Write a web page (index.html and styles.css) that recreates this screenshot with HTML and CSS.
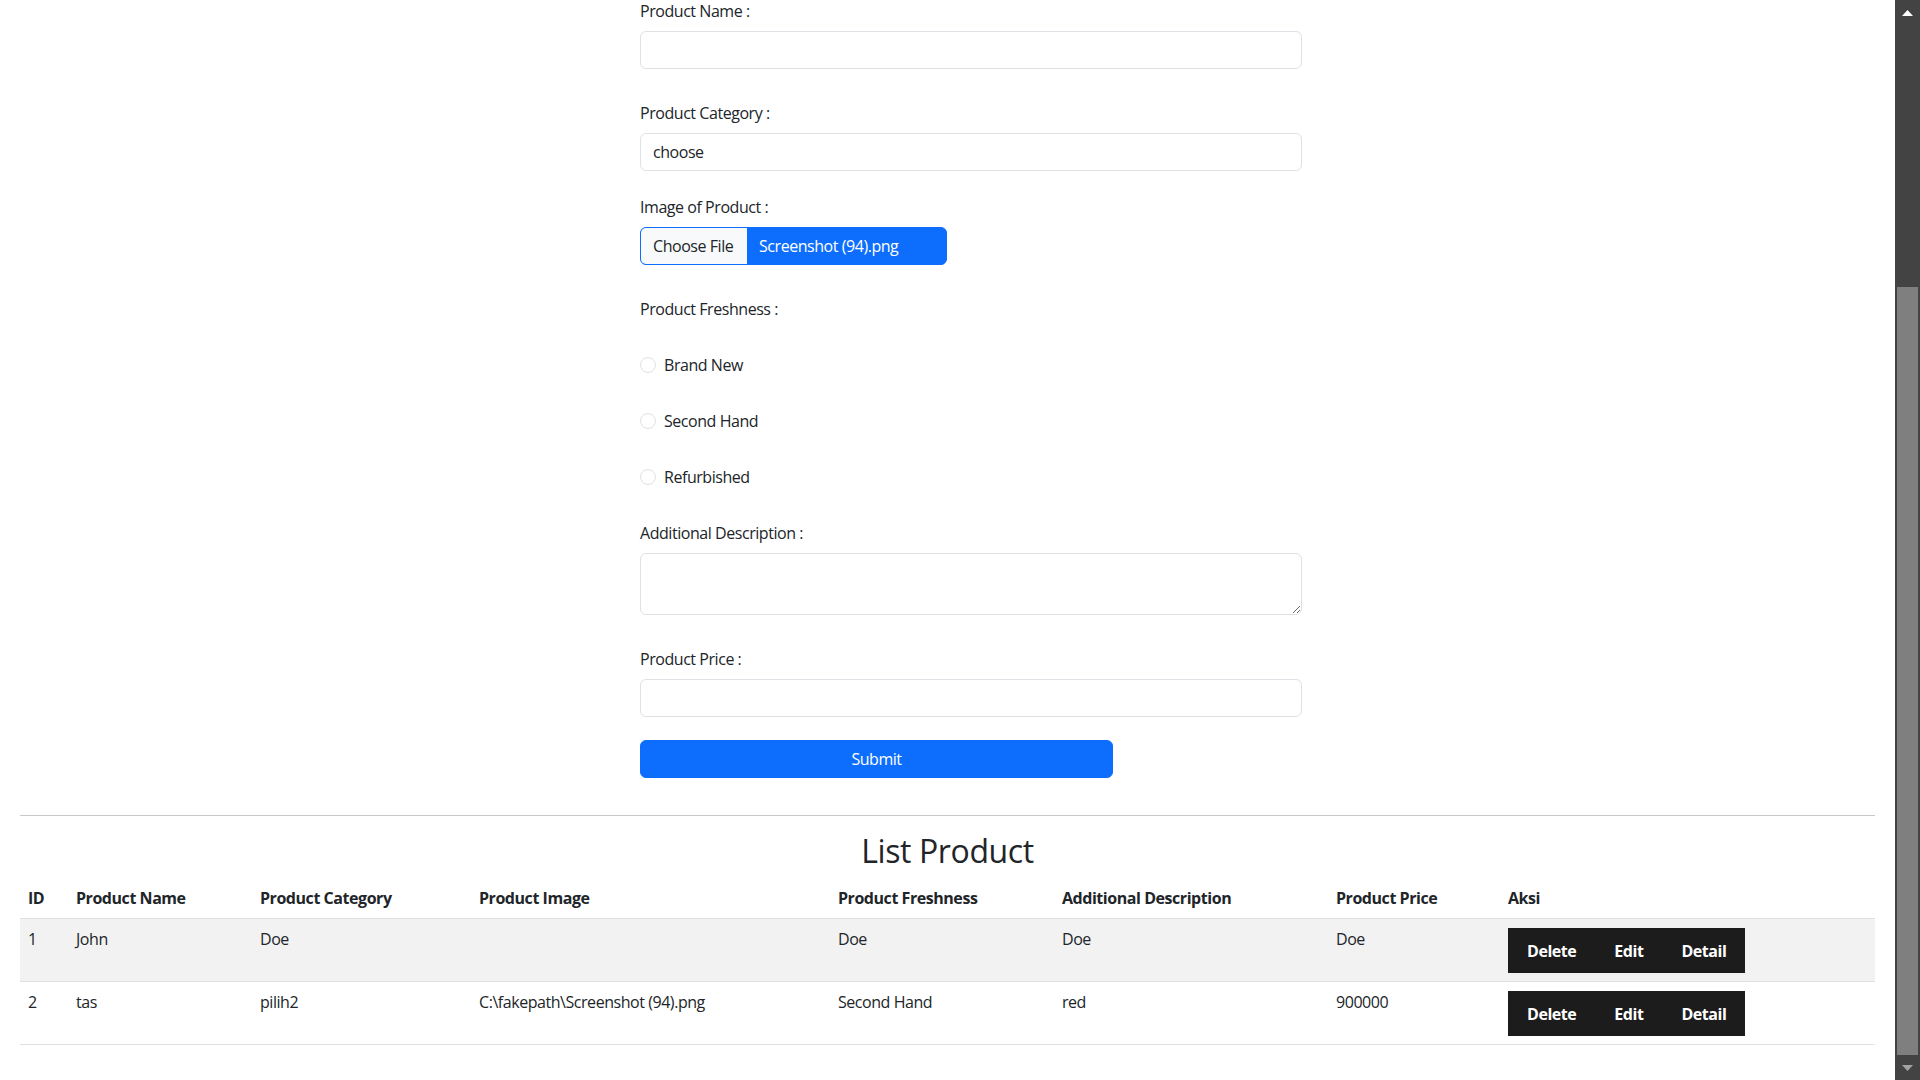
FILE: index.html
```html
<!DOCTYPE html>
<html lang="en">
<head>
<meta charset="utf-8">
<title>Product Form</title>
<link rel="stylesheet" href="styles.css">
</head>
<body>
<div class="page">
  <main class="content">
    <form class="product-form">
      <div class="field field-lg">
        <label class="form-label">Product Name :</label>
        <input class="form-control" type="text">
      </div>
      <div class="field field-md">
        <label class="form-label">Product Category :</label>
        <input class="form-control" type="text" value="choose">
      </div>
      <div class="field field-lg">
        <label class="form-label">Image of Product :</label>
        <div class="file-input">
          <span class="file-btn">Choose File</span>
          <span class="file-name">Screenshot (94).png</span>
        </div>
      </div>
      <div class="radio-group">
        <label class="form-label plain">Product Freshness :</label>
        <div class="form-check"><input class="form-check-input" type="radio" name="fresh"><label>Brand New</label></div>
        <div class="form-check"><input class="form-check-input" type="radio" name="fresh"><label>Second Hand</label></div>
        <div class="form-check"><input class="form-check-input" type="radio" name="fresh"><label>Refurbished</label></div>
      </div>
      <div class="field field-lg">
        <label class="form-label">Additional Description :</label>
        <textarea class="form-control textarea" rows="2"></textarea>
      </div>
      <div class="field field-submit">
        <label class="form-label">Product Price :</label>
        <input class="form-control" type="text">
      </div>
      <button type="button" class="btn-submit">Submit</button>
    </form>

    <hr class="divider">

    <h2 class="list-title">List Product</h2>

    <table class="product-table">
      <colgroup>
        <col class="c-id"><col class="c-name"><col class="c-cat"><col class="c-img"><col class="c-fresh"><col class="c-desc"><col class="c-price"><col class="c-aksi">
      </colgroup>
      <thead>
        <tr>
          <th>ID</th><th>Product Name</th><th>Product Category</th><th>Product Image</th><th>Product Freshness</th><th>Additional Description</th><th>Product Price</th><th>Aksi</th>
        </tr>
      </thead>
      <tbody>
        <tr class="striped">
          <td>1</td><td>John</td><td>Doe</td><td></td><td>Doe</td><td>Doe</td><td>Doe</td>
          <td><div class="btn-group"><button type="button">Delete</button><button type="button">Edit</button><button type="button">Detail</button></div></td>
        </tr>
        <tr>
          <td>2</td><td>tas</td><td>pilih2</td><td>C:\fakepath\Screenshot (94).png</td><td>Second Hand</td><td>red</td><td>900000</td>
          <td><div class="btn-group"><button type="button">Delete</button><button type="button">Edit</button><button type="button">Detail</button></div></td>
        </tr>
      </tbody>
    </table>
  </main>

  <aside class="scrollbar">
    <div class="sb-arrow">
      <svg width="11" height="6" viewBox="0 0 11 6"><polygon points="5.5,0 11,6 0,6" fill="#ffffff"/></svg>
    </div>
    <div class="sb-track"><div class="sb-thumb"></div></div>
    <div class="sb-arrow">
      <svg width="11" height="6" viewBox="0 0 11 6"><polygon points="0,0 11,0 5.5,6" fill="#a3a3a3"/></svg>
    </div>
  </aside>
</div>
</body>
</html>
```

FILE: styles.css
```css
* { box-sizing: border-box; }

html, body {
  margin: 0;
  padding: 0;
  height: 1080px;
  overflow: hidden;
  background: #ffffff;
}

body {
  font-family: "Open Sans", "Noto Sans", sans-serif;
  font-size: 16px;
  line-height: 24px;
  letter-spacing: -0.45px;
  color: #212529;
}

.page {
  display: flex;
  height: 1080px;
}

.content {
  flex: 1;
  padding: 0 20px;
  min-width: 0;
}

/* ---------- form ---------- */
.product-form {
  margin-left: 620px;
  width: 662px;
  display: flex;
  flex-direction: column;
  margin-top: -1px;
}

.field { display: flex; flex-direction: column; }
.field-lg { margin-bottom: 32px; }
.field-md { margin-bottom: 24px; }
.field-submit { margin-bottom: 23px; }

.form-label {
  display: block;
  margin-bottom: 8px;
  height: 24px;
}
.form-label.plain { margin-bottom: 32px; }

.form-control {
  display: block;
  width: 100%;
  height: 38px;
  padding: 6px 12px;
  font: inherit;
  letter-spacing: inherit;
  color: #212529;
  background: #ffffff;
  border: 1px solid #dee2e6;
  border-radius: 6px;
  outline: none;
}

.textarea {
  height: 62px;
  resize: vertical;
}

.file-input {
  display: flex;
  width: 307px;
  height: 38px;
  border: 1px solid #0d6efd;
  border-radius: 6px;
  overflow: hidden;
  background: #0d6efd;
  white-space: nowrap;
}
.file-btn {
  flex: none;
  background: #f8f9fa;
  color: #212529;
  padding: 6px 12px;
  width: 106px;
}
.file-name {
  color: #ffffff;
  padding: 6px 12px;
}

.radio-group {
  display: flex;
  flex-direction: column;
  margin-bottom: 32px;
}
.form-check {
  display: flex;
  align-items: center;
  height: 24px;
  margin-bottom: 32px;
}
.form-check:last-child { margin-bottom: 0; }
.form-check-input {
  appearance: none;
  -webkit-appearance: none;
  flex: none;
  width: 16px;
  height: 16px;
  margin: 0 8px 0 0;
  border: 1px solid #dee2e6;
  border-radius: 50%;
  background: #ffffff;
}

.btn-submit {
  width: 473px;
  height: 38px;
  background: #0d6efd;
  color: #ffffff;
  border: 1px solid #0d6efd;
  border-radius: 6px;
  font: inherit;
  letter-spacing: inherit;
  padding: 6px 12px;
  margin-bottom: 21px;
}

/* ---------- list ---------- */
.divider {
  margin: 16px 0;
  border: 0;
  border-top: 1px solid #c9c9c9;
  height: 0;
}

.list-title {
  margin: 0 0 8px;
  font-size: 32px;
  font-weight: 500;
  line-height: 38px;
  letter-spacing: -0.4px;
  text-align: center;
}

.product-table {
  width: 1855px;
  table-layout: fixed;
  border-collapse: collapse;
}
.c-id { width: 48px; }
.c-name { width: 184px; }
.c-cat { width: 219px; }
.c-img { width: 359px; }
.c-fresh { width: 224px; }
.c-desc { width: 274px; }
.c-price { width: 172px; }
.c-aksi { width: 375px; }

.product-table th,
.product-table td {
  padding: 8px;
  text-align: left;
  vertical-align: top;
  border-bottom: 1px solid #dee2e6;
  white-space: nowrap;
}
.product-table th { font-weight: 700; }
.product-table tr.striped td { background: #f2f2f2; }

.btn-group {
  display: inline-flex;
  background: #1c1c1c;
  margin-top: 1px;
}
.btn-group button {
  height: 45px;
  padding: 0 19px;
  border: 0;
  background: #1c1c1c;
  color: #ffffff;
  font: inherit;
  font-weight: 700;
  letter-spacing: inherit;
}

/* ---------- scrollbar ---------- */
.scrollbar {
  width: 25px;
  background: #434343;
  display: flex;
  flex-direction: column;
}
.sb-arrow {
  height: 25px;
  display: flex;
  align-items: center;
  justify-content: center;
}
.sb-track {
  flex: 1;
  padding: 262px 2px 0;
  display: flex;
}
.sb-thumb {
  flex: 1;
  background: #7f7f7f;
}
```
